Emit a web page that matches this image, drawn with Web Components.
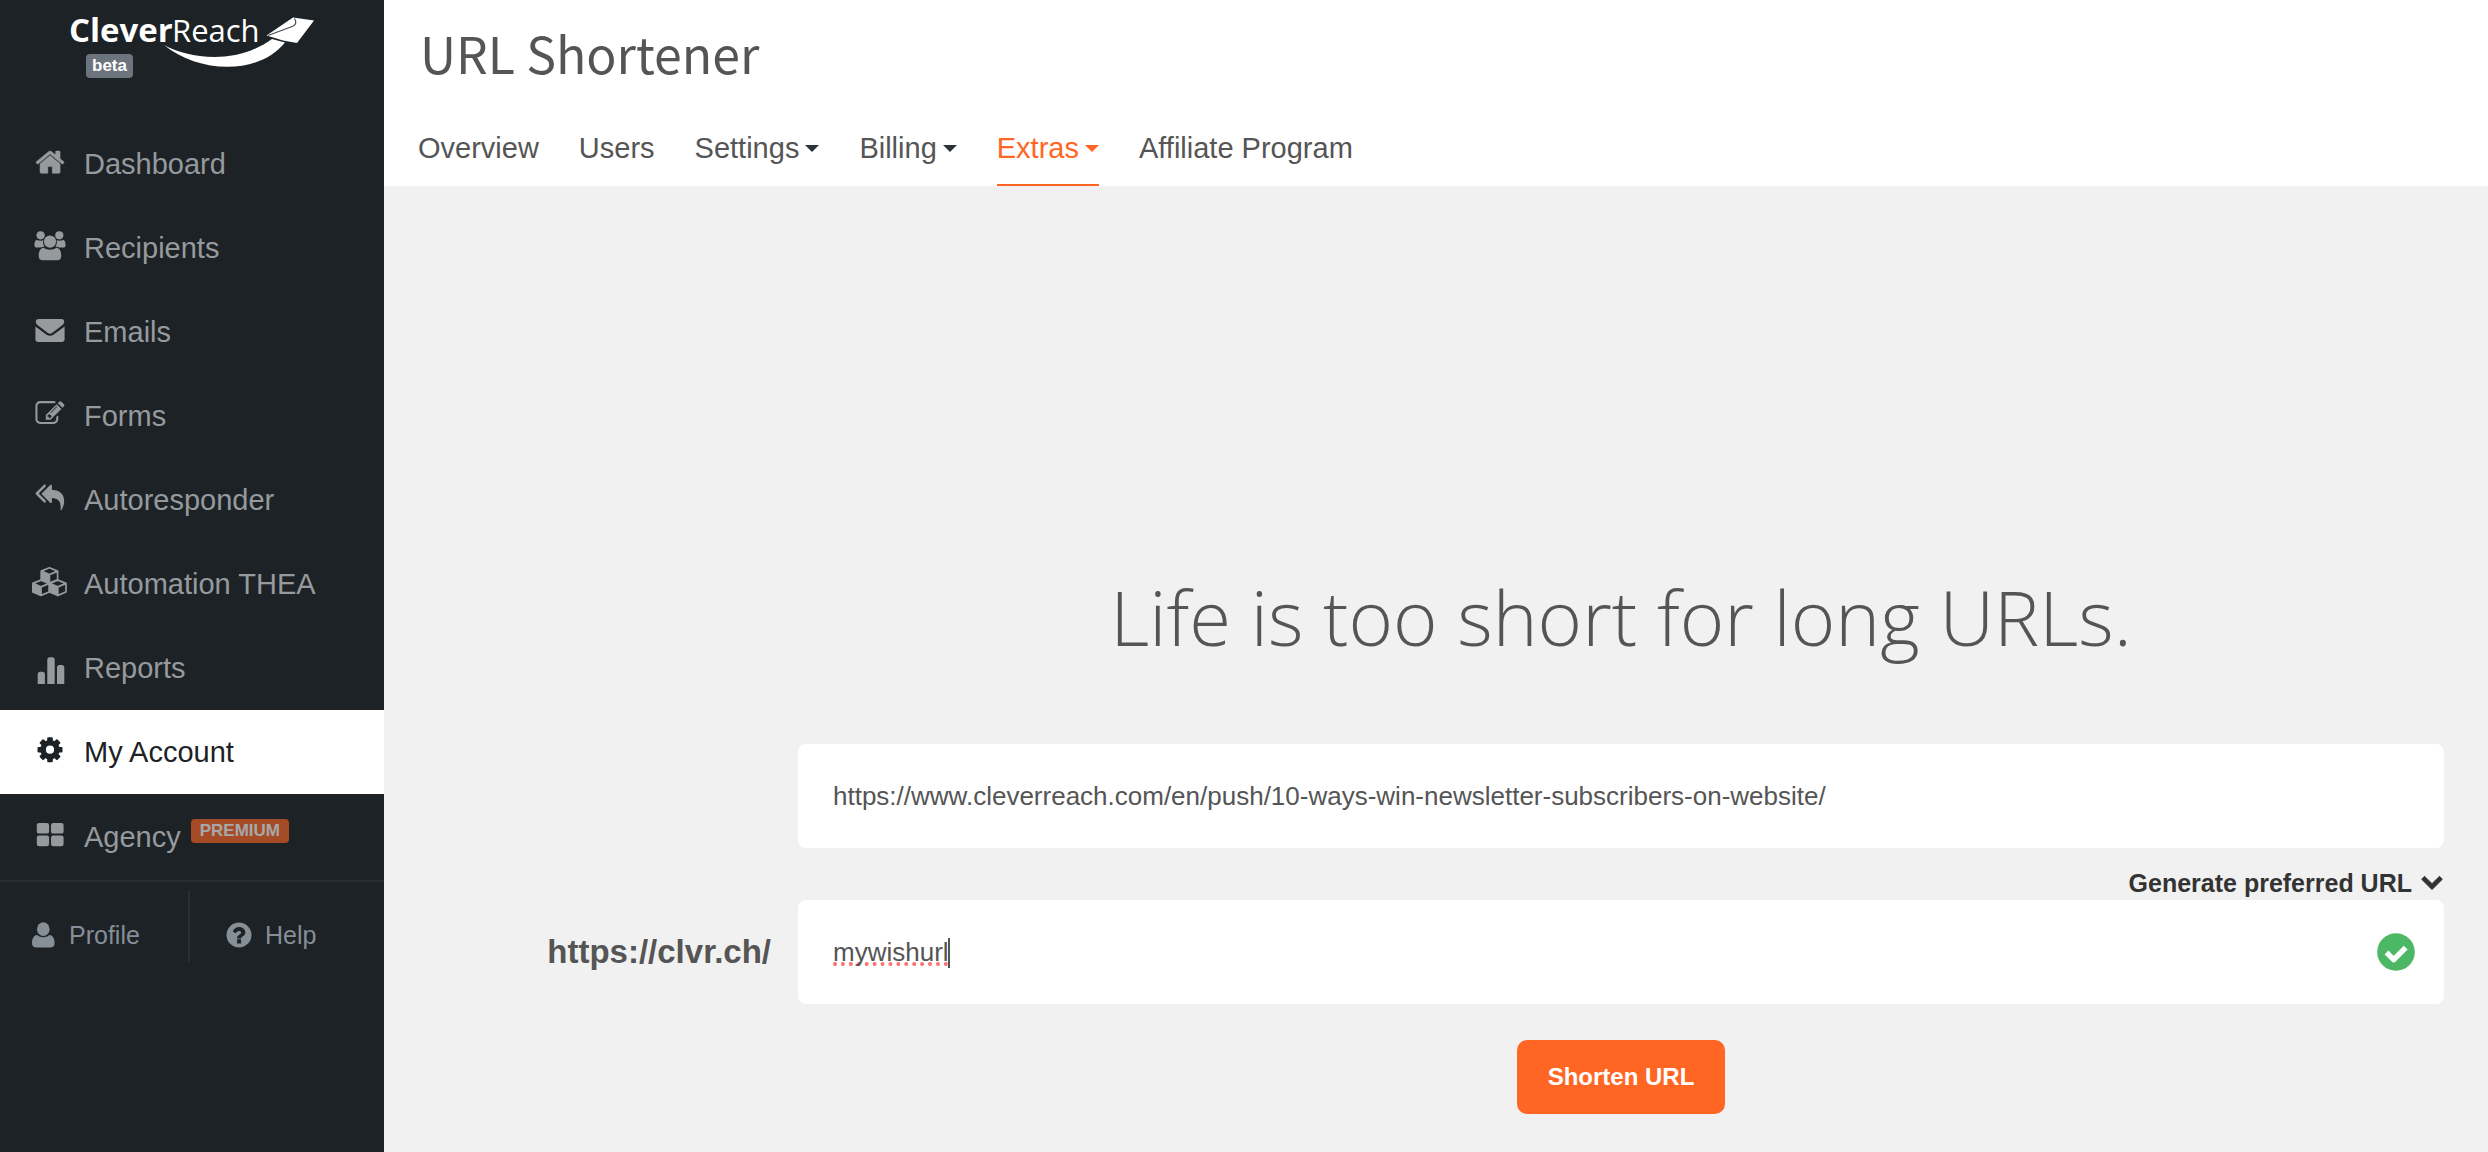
<!DOCTYPE html>
<html lang="en">
<head>
<meta charset="utf-8">
<title>URL Shortener</title>
<style>
  html, body { margin: 0; min-height: 100%; }
  body { font-family: "Liberation Sans", Arial, sans-serif; background: #f1f1f1; color: #555; }
</style>
</head>
<body>
<cr-app>
  <cr-sidebar slot="side">
    <cr-nav-item icon="home">Dashboard</cr-nav-item>
    <cr-nav-item icon="people">Recipients</cr-nav-item>
    <cr-nav-item icon="mail">Emails</cr-nav-item>
    <cr-nav-item icon="form">Forms</cr-nav-item>
    <cr-nav-item icon="reply">Autoresponder</cr-nav-item>
    <cr-nav-item icon="cubes">Automation THEA</cr-nav-item>
    <cr-nav-item icon="bars">Reports</cr-nav-item>
    <cr-nav-item icon="gear" active>My Account</cr-nav-item>
    <cr-nav-item icon="tiles" last>Agency<cr-badge slot="badge" tone="premium">PREMIUM</cr-badge></cr-nav-item>
    <cr-foot-link slot="foot" icon="user">Profile</cr-foot-link>
    <cr-foot-link slot="foot" icon="help">Help</cr-foot-link>
  </cr-sidebar>
  <cr-header slot="head">
    <span slot="title">URL Shortener</span>
    <cr-tab>Overview</cr-tab>
    <cr-tab>Users</cr-tab>
    <cr-tab menu>Settings</cr-tab>
    <cr-tab menu>Billing</cr-tab>
    <cr-tab menu active>Extras</cr-tab>
    <cr-tab>Affiliate Program</cr-tab>
  </cr-header>
  <cr-shortener></cr-shortener>
</cr-app>

<script>
const gearTeeth = [0, 45, 90, 135, 180, 225, 270, 315]
  .map(a => `<rect x="15.2" y="3.2" width="5.6" height="4.5" rx="1" transform="rotate(${a} 18 15.7)"/>`).join('');

const cube = (x, y) => `<g transform="translate(${x} ${y})">
  <path d="M.8 4.2 9 .9l8.200 3.300v8.600L9 16.200.8 12.800zM.8 4.200 9 7.700l8.200-3.500M9 7.700v8.500" fill="none" stroke="currentColor" stroke-width="1.700" stroke-linejoin="round"/>
  <path d="M.8 4.200 9 7.700v8.500L.8 12.800z"/></g>`;

const ICONS = {
  home: [36, 36, `<path transform="translate(2.500 .6) scale(.01737)" stroke="currentColor" stroke-width="30" d="M1472 992v480q0 26-19 45t-45 19h-384v-384h-256v384h-384q-26 0-45-19t-19-45v-480q0-1 .5-3t.5-3l575-474 575 474q1 2 1 6zm223-69l-62 74q-8 9-21 11h-3q-13 0-21-7l-692-577-692 577q-12 8-24 7-13-2-21-11l-62-74q-8-10-7-23.5t11-21.5l719-599q32-26 76-26t76 26l244 204v-195q0-14 9-23t23-9h192q14 0 23 9t9 23v408l219 182q10 8 11 21.5t-7 23.5z"/>`],
  people: [36, 36, `<circle cx="8.600" cy="5.300" r="4.100"/><circle cx="27.300" cy="5.300" r="4.100"/>
    <path d="M4.500 9.800c1.500 1 5.500 1.200 6.800.4-.6 3 .2 5 1.400 6.200-1.500.3-3 .8-4 1.200H5c-1.800 0-2.600-1-2.600-2.600 0-2 .5-4.200 2.100-5.200zM31.500 9.800c-1.500 1-5.500 1.200-6.800.4.6 3-.2 5-1.400 6.200 1.500.3 3 .8 4 1.200H31c1.800 0 2.600-1 2.600-2.600 0-2-.5-4.200-2.100-5.200z"/>
    <circle cx="18" cy="11.600" r="6.100"/>
    <path d="M11.500 17.800c3.800 2.600 9.200 2.600 13 0 3.600.5 4.800 4.200 4.800 8 0 3-1.500 4.500-4.300 4.500H11c-2.800 0-4.300-1.500-4.300-4.500 0-3.800 1.200-7.500 4.800-8z"/>`],
  mail: [36, 36, `<path d="M6.500 5h23c1.800 0 2.700 1 2.700 2.600 0 1.700-.8 2.800-2 3.700L20.500 18.700c-1.900 1.300-3.100 1.300-5 0L5.800 11.300c-1.200-.9-2-2-2-3.700C3.800 6 4.700 5 6.500 5z"/>
    <path d="M3.400 12.400 14.300 20.400c2.600 1.900 4.800 1.900 7.400 0L32.600 12.400V25.200c0 1.800-1 2.800-2.800 2.800H6.200c-1.800 0-2.800-1-2.800-2.800z"/>`],
  form: [36, 36, `<path transform="translate(3.400 1) scale(.01625)" d="M888 1184l116-116-152-152-116 116v56h96v96h56zm440-720q-16-16-33 1l-350 350q-17 17-1 33t33-1l350-350q17-17 1-33zm80 594v190q0 119-84.500 203.500t-203.500 84.500h-832q-119 0-203.500-84.500t-84.500-203.500v-832q0-119 84.500-203.500t203.500-84.500h832q63 0 117 25 15 7 18 23 3 17-9 29l-49 49q-14 14-32 8-23-6-45-6h-832q-66 0-113 47t-47 113v832q0 66 47 113t113 47h832q66 0 113-47t47-113v-126q0-13 9-22l64-64q15-15 35-7t20 29zm-96-738l288 288-672 672h-288v-288zm444 132l-92 92-288-288 92-92q28-28 68-28t68 28l152 152q28 28 28 68t-28 68z"/>`],
  reply: [36, 36, `<path transform="translate(3.500 1.300) scale(.016)" d="M640 1082v70q0 42-39 59-13 5-25 5-27 0-45-19l-512-512q-19-19-19-45t19-45l512-512q29-31 70-14 39 17 39 59v69l-397 398q-19 19-19 45t19 45zm1152 58q0 58-17 133.500t-38.500 138-48 125-40.500 90.500l-20 40q-8 17-28 17-6 0-9-1-25-8-23-34 43-400-106-565-64-71-170.500-110.500t-267.500-52.500v251q0 42-39 59-13 5-25 5-27 0-45-19l-512-512q-19-19-19-45t19-45l512-512q29-31 70-14 39 17 39 59v262q411 28 599 221 169 173 169 509z"/>`],
  cubes: [36, 36, cube(8.4, .9) + cube(0, 13.2) + cube(16.8, 13.2)],
  bars: [36, 36, `<path d="M5.700 34V24.200q0-2.500 2.500-2.500h2.200q2.500 0 2.500 2.500V34zM15.300 34V9.800q0-2.500 2.500-2.500h2.400q2.500 0 2.500 2.500V34zM25 34V17.500q0-2.500 2.500-2.500h2.300q2.500 0 2.500 2.500V34z"/>`],
  gear: [36, 36, `<circle cx="18" cy="15.700" r="6.900" fill="none" stroke="currentColor" stroke-width="5.600"/>${gearTeeth}`],
  tiles: [36, 36, `<rect x="4.800" y="4" width="12.300" height="10.600" rx="2.200"/><rect x="19" y="4" width="12.600" height="10.600" rx="2.200"/><rect x="4.800" y="16.600" width="12.300" height="10.600" rx="2.200"/><rect x="19" y="16.600" width="12.600" height="10.600" rx="2.200"/>`],
  user: [24, 26, `<path d="M5.200 12.900c3.600 3 8.600 3 12.200 0 3.800.3 5.200 4.200 5.200 8.100 0 3-1.600 4.500-4.400 4.500H4.400C1.600 25.500 0 24 0 21c0-3.900 1.400-7.800 5.200-8.100z"/><ellipse cx="11.300" cy="7.200" rx="6.300" ry="6.900"/>`],
  help: [26, 26, `<path fill-rule="evenodd" d="M13 .5a12.500 12.500 0 1 1 0 25 12.500 12.500 0 0 1 0-25zm-1.900 17.300v3.200q0 .5.500.5h3q.5 0 .5-.5v-3.200q0-.5-.5-.5h-3q-.5 0-.5.5zM6.900 8.900q-.3.400.1.700l2.200 1.600q.3.300.6-.1c1-1.300 1.800-2.100 3.200-2.100 1.200 0 2.200.7 2.200 1.600 0 1.200-1 1.600-2.200 2.400-1.300.9-1.900 1.700-1.900 3.100q0 .5.500.5h3q.5 0 .5-.5c.1-.8.8-1.200 1.800-1.800 1.300-.9 2.400-2 2.400-3.900 0-3.200-3.100-5.300-6.100-5.300-2.800 0-4.800 1.300-6.300 3.800z"/>`],
  chevron: [24, 16, `<path d="M1.700 4.300 12 14.500 22.300 4.300 19.500 1.300 12 8.700 4.500 1.300z" stroke="currentColor" stroke-linejoin="round"/>`],
  check: [38, 38, `<circle cx="19" cy="19" r="18.800"/><path d="M9.500 19.500 16.700 26.600 28.700 14.600" fill="none" stroke="#fff" stroke-width="5.400" stroke-linejoin="round"/>`]
};

function define(name, html, setup) {
  const template = document.createElement('template');
  template.innerHTML = html;
  customElements.define(name, class extends HTMLElement {
    connectedCallback() {
      if (this.shadowRoot) return;
      const root = this.attachShadow({ mode: 'open' });
      root.append(template.content.cloneNode(true));
      if (setup) setup.call(this, root);
    }
  });
}

function passIcon(root) {
  root.querySelector('cr-icon').setAttribute('name', this.getAttribute('icon'));
}

define('cr-badge', `<style>
  :host { display: inline-flex; align-items: center; justify-content: center; box-sizing: border-box;
    height: 24px; padding: 0 6px; border-radius: 4px; background: #6c757d; color: #fff;
    font-size: 17px; font-weight: 700; line-height: 24px; }
  :host([tone=premium]) { padding: 0 9px; background: #a54c26; color: #a6a8a9; }
</style><slot></slot>`);

define('cr-logo', `<style>
  :host { display: block; }
  svg { display: block; overflow: visible; }
  text { font-family: "Open Sans", sans-serif; fill: #fff; }
  cr-badge { position: absolute; left: 86px; top: 54px; }
</style>
<svg width="250" height="50" viewBox="0 0 250 50">
  <text x="-1" y="30" font-size="33" font-weight="700">Clever</text>
  <text x="102" y="30" font-size="31">Reach</text>
  <path fill="#fff" d="M94 33C118 46 165 54 202 27L215 30.500C188 64 128 61 94 33z"/>
  <path fill="#fff" d="M223 5.500 244 8.500 227 31 213 28.500 196.500 23.500z"/>
  <path fill="none" stroke="#4a4d51" stroke-width="1.200" d="M198 23.500 223.500 14C226 12.500 226.500 10 224.500 6.500"/>
</svg>
<cr-badge>beta</cr-badge>`);

define('cr-nav-item', `<style>
  :host { display: block; }
  a { display: flex; align-items: center; height: 84px; padding-left: 32px; gap: 16px;
    color: #969a9d; font-size: 29px; line-height: 40px; text-decoration: none; }
  :host([active]) a { background: #fff; color: #1d2226; }
  :host([last]) a { height: 86px; border-bottom: 2px solid #2a2e32; }
  span { display: flex; align-items: center; gap: 10px; }
  ::slotted(cr-badge) { margin-bottom: 12px; }
</style><a href="#"><cr-icon></cr-icon><span><slot></slot><slot name="badge"></slot></span></a>`, passIcon);

define('cr-foot-link', `<style>
  :host { display: block; box-sizing: border-box; height: 72px; padding-top: 18px; }
  a { display: flex; align-items: center; height: 54px; gap: 13px; color: #868e96; font-size: 25px; text-decoration: none; }
</style><a href="#"><cr-icon></cr-icon><slot></slot></a>`, passIcon);

define('cr-sidebar', `<style>
  :host { display: block; background: #1d2226; }
  header { box-sizing: border-box; height: 122px; padding: 12px 0 0 70px; position: relative; }
  footer { display: grid; grid-template-columns: 190px 1fr; padding-top: 8px; }
  footer ::slotted([icon=user]) { padding-left: 32px; border-right: 2px solid #2a2e32; }
  footer ::slotted([icon=help]) { padding-left: 36px; }
</style>
<header><cr-logo></cr-logo></header>
<nav aria-label="Main"><slot></slot></nav>
<footer><slot name="foot"></slot></footer>`);

define('cr-tab', `<style>
  :host { display: block; }
  a { display: flex; align-items: center; gap: 6px; height: 72px; padding-top: 2px; border-bottom: 2px solid transparent;
    color: #555; font-size: 29px; line-height: 72px; text-decoration: none; }
  i { display: none; border: 7px solid transparent; border-top-color: #2b3238; border-bottom: 0; }
  :host([menu]) i { display: block; }
  :host([active]) a { color: #ff6624; border-bottom-color: #ff6624; }
  :host([active]) i { border-top-color: #ff6624; }
</style><a href="#"><slot></slot><i></i></a>`);

define('cr-header', `<style>
  :host { display: block; background: #fff; padding: 0 34px; }
  h1 { margin: 0; padding: 0 2px; font: 400 50px/110px "Noto Sans CJK JP", sans-serif; color: #555; }
  h1 slot { display: block; height: 110px; line-height: 104px; }
  nav { display: flex; gap: 40px; }
</style><h1><slot name="title"></slot></h1><nav aria-label="Account"><slot></slot></nav>`);

define('cr-shortener', `<style>
  :host { display: block; padding: 389px 44px 38px; }
  form { display: grid; grid-template-columns: 343px minmax(0, 1fr); column-gap: 27px; align-items: center; }
  form > * { grid-column: 2; }
  h2 { margin: 0 0 85px; font: 300 76px/84px "Open Sans", sans-serif; text-align: center; color: #555; }
  input { display: block; box-sizing: border-box; width: 100%; height: 104px; border: 0; border-radius: 8px; outline: 0;
    padding: 0 35px; background: #fff; color: #555; font: 26px "Liberation Sans", sans-serif; }
  label { grid-column: 1; justify-self: end; font-size: 33px; font-weight: 700; }
  .toggle { justify-self: end; display: flex; align-items: center; gap: 8px; height: 34px; margin-top: 18px; padding: 0;
    border: 0; background: none; color: #333; font: 700 25px/34px "Liberation Sans", sans-serif; }
  .field { position: relative; grid-column: 2; }
  .field input { text-decoration: underline dotted #fb6f6c 4px; text-underline-offset: 2px; text-decoration-skip-ink: none; }
  .field cr-icon { position: absolute; right: 29px; top: 33px; color: #4cb866; }
  .caret { position: absolute; left: 150px; top: 38px; width: 2px; height: 30px; background: #555; }
  .submit { justify-self: center; margin-top: 36px; height: 74px; padding: 0 31px; border: 0; border-radius: 10px;
    background: #ff6624; color: #fff; font: 700 24px "Liberation Sans", sans-serif; }
</style>
<form onsubmit="return false">
  <h2>Life is too short for long URLs.</h2>
  <input type="text" aria-label="Long URL" spellcheck="false" value="https://www.cleverreach.com/en/push/10-ways-win-newsletter-subscribers-on-website/">
  <button class="toggle" type="button">Generate preferred URL<cr-icon name="chevron"></cr-icon></button>
  <label for="alias">https://clvr.ch/</label>
  <div class="field">
    <input id="alias" type="text" spellcheck="false" value="mywishurl">
    <span class="caret"></span>
    <cr-icon name="check"></cr-icon>
  </div>
  <button class="submit" type="submit">Shorten URL</button>
</form>`);

define('cr-app', `<style>
  :host { display: grid; grid-template-columns: 384px minmax(0, 1fr); min-height: 100vh; }
</style><slot name="side"></slot><main><slot name="head"></slot><slot></slot></main>`);

/* Icons upgrade last, once their owners have named them. */
define('cr-icon', `<style>
  :host { display: block; flex: none; }
  svg { display: block; fill: currentColor; }
</style><div></div>`, function (root) {
  const [w, h, body] = ICONS[this.getAttribute('name')];
  root.querySelector('div').innerHTML = `<svg width="${w}" height="${h}" viewBox="0 0 ${w} ${h}" aria-hidden="true">${body}</svg>`;
});
</script>
</body>
</html>
